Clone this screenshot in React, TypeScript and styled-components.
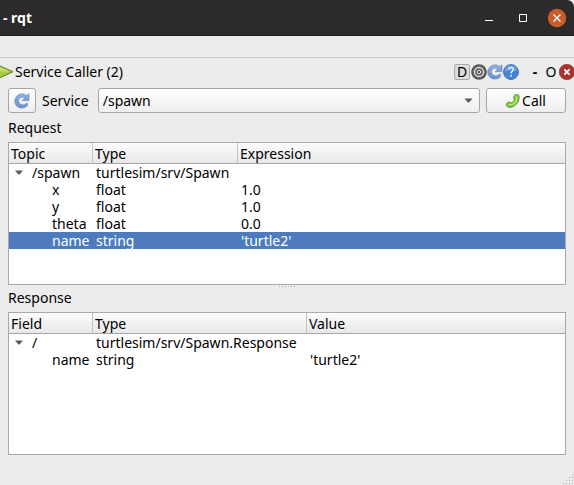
import React, { useId } from "react";
import styled, { createGlobalStyle } from "styled-components";

const GlobalStyle = createGlobalStyle`
  * { box-sizing: border-box; }
  body { margin: 0; background: #ececec; }
  body, button, select {
    font-family: "Noto Sans", "Open Sans", sans-serif;
    font-size: 14px;
    line-height: 17px;
    color: #000;
  }
`;

const Window = styled.div`
  min-height: 100vh;
  display: flex;
  flex-direction: column;
  background: #ececec;
`;

const TitleBar = styled.header`
  height: 36px;
  flex: none;
  display: flex;
  align-items: center;
  justify-content: space-between;
  padding: 0 7px 0 3px;
  background: #2c2a2b;
  border-bottom: 1px solid #1c1b1b;
  border-top-right-radius: 7px;
  color: #fff;
`;

const Title = styled.h1`
  margin: 0;
  font-size: 14px;
  line-height: 17px;
  font-weight: 700;
`;

const WindowControls = styled.div`
  display: flex;
  align-items: center;
  gap: 14px;
`;

const IconButton = styled.button`
  flex: none;
  display: grid;
  place-items: center;
  padding: 0;
  border: 0;
  background: none;
  color: inherit;
  svg { display: block; }
`;

const MenuBar = styled.div`
  height: 22px;
  flex: none;
  border-bottom: 1px solid #cacaca;
`;

const DockBar = styled.div`
  height: 27px;
  flex: none;
  display: flex;
  align-items: center;
  overflow: hidden;
`;

const DockTitle = styled.h2`
  flex: 1;
  margin: 0;
  padding-left: 1px;
  font-size: 14px;
  line-height: 17px;
  font-weight: 400;
`;

const DockTools = styled.div`
  display: flex;
  align-items: center;
  margin-right: 8px;
`;

const DockToggle = styled(IconButton)`
  width: 16px;
  height: 16px;
  margin-right: 1px;
  border: 1px solid #a9a9a9;
  border-radius: 2px;
  background: #dcdcdc;
  line-height: 14px;
`;

const DockTextButton = styled(IconButton)<{ $bold?: boolean }>`
  width: 16px;
  height: 17px;
  font-weight: ${(p) => (p.$bold ? 700 : 400)};
`;

const Content = styled.main`
  flex: 1;
  display: flex;
  flex-direction: column;
  padding: 3px 8px 30px;
`;

const ServiceRow = styled.div`
  flex: none;
  display: flex;
  align-items: center;
  gap: 6px;
  height: 25px;
  margin-bottom: 5px;
`;

const PushButton = styled.button<{ $width: number }>`
  width: ${(p) => p.$width}px;
  height: 25px;
  flex: none;
  display: flex;
  align-items: center;
  justify-content: center;
  gap: 2px;
  padding: 0;
  border: 1px solid #a6a6a6;
  border-radius: 3px;
  background: linear-gradient(#fff, #eee);
  svg { display: block; }
`;

const SelectWrap = styled.div`
  flex: 1;
  display: grid;
  align-items: center;
  margin-left: 3px;
  > * { grid-area: 1 / 1; }
  svg { justify-self: end; margin-right: 7px; pointer-events: none; }
`;

const ServiceSelect = styled.select`
  appearance: none;
  width: 100%;
  height: 25px;
  padding: 0 24px 0 4px;
  border: 1px solid #a6a6a6;
  border-radius: 3px;
  background: linear-gradient(#fff, #eee);
`;

const SectionTitle = styled.h3`
  margin: 0;
  height: 24px;
  padding-top: 1px;
  font-size: 14px;
  line-height: 17px;
  font-weight: 400;
`;

const Section = styled.section`
  flex: 1 0 0px;
  display: flex;
  flex-direction: column;
`;

const TreeFrame = styled.div`
  flex: 1;
  border: 1px solid #a9a9a9;
  background: #fff;
`;

const Tree = styled.table`
  width: 100%;
  table-layout: fixed;
  border-collapse: separate;
  border-spacing: 0;
`;

const HeadCell = styled.th<{ $width?: number }>`
  width: ${(p) => (p.$width ? `${p.$width}px` : "auto")};
  height: 21px;
  padding: 0 2px;
  border-bottom: 1px solid #a6a6a6;
  border-right: 1px solid #c4c4c4;
  background: linear-gradient(#fcfcfc, #e8e8e8);
  font-weight: 400;
  text-align: left;
  &:last-child { border-right: 0; }
`;

const Row = styled.tr<{ $selected?: boolean }>`
  background: ${(p) => (p.$selected ? "#4d7bbd" : "transparent")};
  color: ${(p) => (p.$selected ? "#fff" : "#000")};
`;

const Cell = styled.td<{ $indent?: number }>`
  height: 17px;
  padding: 0 0 0 ${(p) => p.$indent ?? 3}px;
  white-space: nowrap;
`;

const Expander = styled(IconButton)`
  display: inline-grid;
  width: 8px;
  height: 17px;
  margin-right: 9px;
  vertical-align: top;
`;

const Splitter = styled.div`
  height: 3px;
  flex: none;
  display: flex;
  justify-content: center;
`;

const Grip = styled.span`
  width: 17px;
  height: 1px;
  margin-top: 1px;
  background: repeating-linear-gradient(90deg, #aaa 0 1px, transparent 1px 3px);
`;

const ResizeCorner = styled.svg`
  position: fixed;
  right: 0;
  bottom: 0;
`;

const Down = ({ width = 8 }: { width?: number }) => (
  <svg width={width} height="5" viewBox="0 0 8 5" aria-hidden="true">
    <path d="M0 .5h8L4.6 4.5H3.4z" fill="#5c5c5c" />
  </svg>
);

const Play = () => (
  <svg width="14" height="16" viewBox="0 0 14 16" aria-hidden="true">
    <path d="M-1 1.5 13 7.7-1 14.2z" fill="#a9cb45" stroke="#5c7d1b" />
    <path d="M0 3 10 7.5H0z" fill="#c3dc6c" />
  </svg>
);

const Reload = () => {
  const id = useId();
  return (
    <svg width="16" height="16" viewBox="0 0 16 16" aria-hidden="true">
      <defs>
        <linearGradient id={id} x1="0" y1="0" x2="0" y2="1">
          <stop offset="0" stopColor="#8fb0e2" />
          <stop offset="1" stopColor="#6c92d0" />
        </linearGradient>
      </defs>
      <path
        d="M8 7.6h7V.8l-2 1.8C9.7.1 5.3.4 2.7 3.2.1 6.1.2 10.6 3 13.2c3 2.7 8 2.4 10.6-.6l-.6-2.9c-1.7 2.1-4.9 2.8-6.8 1.1-1.7-1.5-1.7-3.9-.2-5.3 1.3-1.2 3-1.3 4.3-.4z"
        fill={`url(#${id})`}
        stroke="#5c80ba"
        strokeWidth=".6"
      />
      <path d="M5.9 5.6c1.2-1.2 2.8-1.3 4-.4L8.2 7.2c-.9 0-1.2.8-.7 1.5.8 1 2.7 1.3 4.6.7-1.7 2-4.4 2.4-6 1-1.5-1.3-1.6-3.5-.2-4.8z" fill="#eee" />
    </svg>
  );
};

const Gear = () => (
  <svg width="16" height="16" viewBox="0 0 16 16" aria-hidden="true">
    <circle cx="8" cy="8" r="7.8" fill="#555" />
    <circle cx="8" cy="8" r="4.4" fill="none" stroke="#e8e8e8" strokeWidth="1.3" />
    <circle cx="8" cy="8" r="5.2" fill="none" stroke="#ddd" strokeWidth=".9" strokeDasharray="1.4 1.3" />
    <circle cx="8" cy="8" r="1.8" fill="#555" stroke="#eee" />
  </svg>
);

const Help = () => (
  <svg width="16" height="16" viewBox="0 0 16 16" aria-hidden="true">
    <circle cx="8" cy="8" r="7.5" fill="#4483d8" stroke="#526f9c" strokeWidth=".9" />
    <path d="M2 7a6 6 0 0 1 12 0c-3-1-8-1-12 1z" fill="#6ca2e5" />
    <path d="M5.8 5.3c.3-2.3 4.5-2.3 4.5.1 0 1.8-2.3 1.9-2.3 4" fill="none" stroke="#fff" strokeWidth="1.2" />
    <circle cx="8" cy="11.8" r=".9" fill="#fff" />
  </svg>
);

const CloseDock = () => (
  <svg width="15" height="16" viewBox="0 0 15 16" aria-hidden="true">
    <circle cx="7.9" cy="8" r="7.7" fill="#a9332d" stroke="#84332f" strokeWidth=".6" />
    <path d="m5.3 5.4 5.2 5.2m0-5.2-5.2 5.2" stroke="#fff" strokeWidth="1.7" />
  </svg>
);

const Phone = () => (
  <svg width="14" height="14" viewBox="0 0 14 14" aria-hidden="true">
    <path
      d="M8.2 1.6c.8-1.4 3.5-1.6 4.6-.3 1.1 4-1 8.1-4.3 10.4-2.3 1.7-5.6 2.2-7.4.9C.2 11.4.5 9.2 1.7 8.4c1.1-.7 2.6-.2 3.5.8 1.6-.9 2.8-2.1 3.2-3.7-.9-1-1-2.6-.2-3.9z"
      fill="#86cc45"
      stroke="#4a8a2a"
      strokeWidth=".9"
    />
    <path d="M10.3 2.2c.9 2.8-.2 6-3.3 7.9-1.4.8-2.9.8-4.3.1" fill="none" stroke="#bfe984" strokeWidth="1.2" />
  </svg>
);

const Minimize = () => (
  <svg width="20" height="20" viewBox="0 0 20 20" aria-hidden="true">
    <path d="M6 12.5h8" stroke="#fff" />
  </svg>
);

const Maximize = () => (
  <svg width="20" height="20" viewBox="0 0 20 20" aria-hidden="true">
    <path d="M6.5 6.5h7v7h-7z" fill="none" stroke="#fff" />
  </svg>
);

const CloseWindow = () => (
  <svg width="20" height="20" viewBox="0 0 20 20" aria-hidden="true">
    <circle cx="10" cy="10" r="9.2" fill="#c75d2a" />
    <path d="m6.5 6.5 7 7m0-7-7 7" stroke="#fff" strokeWidth="1.4" />
  </svg>
);

type Item = { name: string; type: string; value?: string; parent?: boolean; selected?: boolean };

const requestItems: Item[] = [
  { name: "/spawn", type: "turtlesim/srv/Spawn", parent: true },
  { name: "x", type: "float", value: "1.0" },
  { name: "y", type: "float", value: "1.0" },
  { name: "theta", type: "float", value: "0.0" },
  { name: "name", type: "string", value: "'turtle2'", selected: true },
];

const responseItems: Item[] = [
  { name: "/", type: "turtlesim/srv/Spawn.Response", parent: true },
  { name: "name", type: "string", value: "'turtle2'" },
];

function TreeView({ title, heads, typeWidth, items }: {
  title: string;
  heads: string[];
  typeWidth: number;
  items: Item[];
}) {
  const widths = [84, typeWidth, undefined];
  return (
    <Section>
      <SectionTitle>{title}</SectionTitle>
      <TreeFrame>
        <Tree aria-label={title}>
          <thead>
            <tr>
              {heads.map((head, i) => (
                <HeadCell key={head} scope="col" $width={widths[i]}>{head}</HeadCell>
              ))}
            </tr>
          </thead>
          <tbody>
            {items.map((item) => (
              <Row key={item.name} $selected={item.selected} aria-selected={item.selected}>
                <Cell $indent={item.parent ? 6 : 43}>
                  {item.parent && (
                    <Expander type="button" aria-label={`Collapse ${item.name}`}><Down /></Expander>
                  )}
                  {item.name}
                </Cell>
                <Cell>{item.type}</Cell>
                <Cell>{item.value}</Cell>
              </Row>
            ))}
          </tbody>
        </Tree>
      </TreeFrame>
    </Section>
  );
}

export default function App() {
  return (
    <Window>
      <GlobalStyle />
      <TitleBar>
        <Title>- rqt</Title>
        <WindowControls>
          <IconButton type="button" aria-label="Minimize"><Minimize /></IconButton>
          <IconButton type="button" aria-label="Maximize"><Maximize /></IconButton>
          <IconButton type="button" aria-label="Close"><CloseWindow /></IconButton>
        </WindowControls>
      </TitleBar>
      <MenuBar />
      <DockBar>
        <Play />
        <DockTitle>Service Caller (2)</DockTitle>
        <DockTools>
          <DockToggle type="button">D</DockToggle>
          <IconButton type="button" aria-label="Settings"><Gear /></IconButton>
          <IconButton type="button" aria-label="Reload"><Reload /></IconButton>
          <IconButton type="button" aria-label="Help"><Help /></IconButton>
        </DockTools>
        <DockTextButton type="button" $bold>-</DockTextButton>
        <DockTextButton type="button">O</DockTextButton>
        <IconButton type="button" aria-label="Close plugin"><CloseDock /></IconButton>
      </DockBar>
      <Content>
        <ServiceRow>
          <PushButton type="button" $width={28} aria-label="Refresh services"><Reload /></PushButton>
          <label htmlFor="service">Service</label>
          <SelectWrap>
            <ServiceSelect id="service" defaultValue="/spawn">
              <option value="/spawn">/spawn</option>
            </ServiceSelect>
            <Down width={9} />
          </SelectWrap>
          <PushButton type="button" $width={80}><Phone />Call</PushButton>
        </ServiceRow>
        <TreeView title="Request" heads={["Topic", "Type", "Expression"]} typeWidth={145} items={requestItems} />
        <Splitter role="separator"><Grip /></Splitter>
        <TreeView title="Response" heads={["Field", "Type", "Value"]} typeWidth={214} items={responseItems} />
      </Content>
      <ResizeCorner width="12" height="12" viewBox="0 0 12 12" aria-hidden="true">
        <path d="M10 1h1v1h-1zM7 4h1v1H7zM10 4h1v1h-1zM4 7h1v1H4zM7 7h1v1H7zM10 7h1v1h-1zM1 10h1v1H1zM4 10h1v1H4zM7 10h1v1H7zM10 10h1v1h-1z" fill="#aaa" />
      </ResizeCorner>
    </Window>
  );
}
